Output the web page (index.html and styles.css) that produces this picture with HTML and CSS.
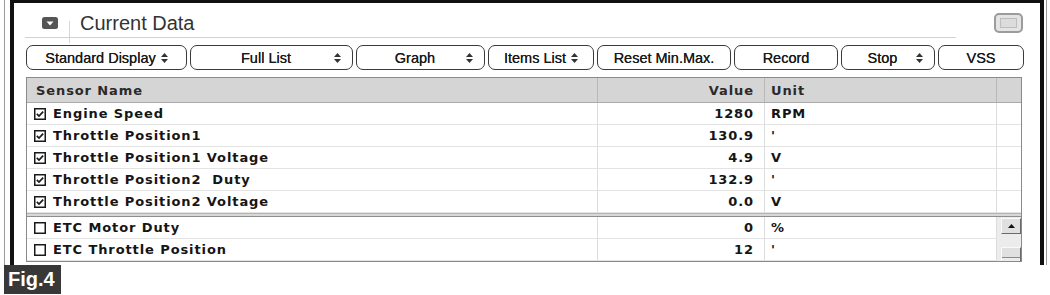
FILE: index.html
```html
<!DOCTYPE html>
<html>
<head>
<meta charset="utf-8">
<link rel="stylesheet" href="styles.css">
</head>
<body>
<div class="shell">
  <div class="frame">
    <div class="top">
      <div class="title-area">
        <span class="collapse"><svg width="16" height="12" viewBox="0 0 16 12"><rect x="0" y="0" width="16" height="12" rx="2.5" fill="#555"/><path d="M4.5 4.5 L11.5 4.5 L8 8.5 Z" fill="#fff"/></svg></span>
        <span class="sep"></span>
        <span class="title">Current Data</span>
      </div>
      <span class="winbtn"><span class="winbtn-in"></span></span>
    </div>

    <div class="toolbar">
      <div class="btn b1 grp"><span>Standard Display</span><svg class="spin" width="7" height="10" viewBox="0 0 7 10"><path d="M0 4 L3.5 0 L7 4 Z M0 6 L7 6 L3.5 10 Z" fill="#333"/></svg></div>
      <div class="btn b2 ctr"><span></span><span>Full List</span><svg class="spin end" width="7" height="10" viewBox="0 0 7 10"><path d="M0 4 L3.5 0 L7 4 Z M0 6 L7 6 L3.5 10 Z" fill="#333"/></svg></div>
      <div class="btn b3 ctr"><span></span><span>Graph</span><svg class="spin end" width="7" height="10" viewBox="0 0 7 10"><path d="M0 4 L3.5 0 L7 4 Z M0 6 L7 6 L3.5 10 Z" fill="#333"/></svg></div>
      <div class="btn b4 grp"><span>Items List</span><svg class="spin" width="7" height="10" viewBox="0 0 7 10"><path d="M0 4 L3.5 0 L7 4 Z M0 6 L7 6 L3.5 10 Z" fill="#333"/></svg></div>
      <div class="btn b5 grp"><span>Reset Min.Max.</span></div>
      <div class="btn b6 grp"><span>Record</span></div>
      <div class="btn b7 ctr"><span></span><span>Stop</span><svg class="spin end" width="7" height="10" viewBox="0 0 7 10"><path d="M0 4 L3.5 0 L7 4 Z M0 6 L7 6 L3.5 10 Z" fill="#333"/></svg></div>
      <div class="btn b8 grp"><span>VSS</span></div>
    </div>

    <div class="table">
      <div class="grid head">
        <div class="c name">Sensor Name</div>
        <div class="c val">Value</div>
        <div class="c unit">Unit</div>
        <div class="c last"></div>
      </div>

      <div class="grid pinned">
        <div class="c name"><svg class="cb" width="12" height="12" viewBox="0 0 12 12"><rect x="0.75" y="0.75" width="10.5" height="10.5" fill="#fff" stroke="#1a1a1a" stroke-width="1.5"/><path d="M2.8 5.8 L5 8 L9.2 3.6" fill="none" stroke="#1a1a1a" stroke-width="1.7"/></svg><span>Engine Speed</span></div>
        <div class="c val">1280</div><div class="c unit">RPM</div><div class="c last"></div>

        <div class="c name"><svg class="cb" width="12" height="12" viewBox="0 0 12 12"><rect x="0.75" y="0.75" width="10.5" height="10.5" fill="#fff" stroke="#1a1a1a" stroke-width="1.5"/><path d="M2.8 5.8 L5 8 L9.2 3.6" fill="none" stroke="#1a1a1a" stroke-width="1.7"/></svg><span>Throttle Position1</span></div>
        <div class="c val">130.9</div><div class="c unit">'</div><div class="c last"></div>

        <div class="c name"><svg class="cb" width="12" height="12" viewBox="0 0 12 12"><rect x="0.75" y="0.75" width="10.5" height="10.5" fill="#fff" stroke="#1a1a1a" stroke-width="1.5"/><path d="M2.8 5.8 L5 8 L9.2 3.6" fill="none" stroke="#1a1a1a" stroke-width="1.7"/></svg><span>Throttle Position1 Voltage</span></div>
        <div class="c val">4.9</div><div class="c unit">V</div><div class="c last"></div>

        <div class="c name"><svg class="cb" width="12" height="12" viewBox="0 0 12 12"><rect x="0.75" y="0.75" width="10.5" height="10.5" fill="#fff" stroke="#1a1a1a" stroke-width="1.5"/><path d="M2.8 5.8 L5 8 L9.2 3.6" fill="none" stroke="#1a1a1a" stroke-width="1.7"/></svg><span>Throttle Position2&nbsp; Duty</span></div>
        <div class="c val">132.9</div><div class="c unit">'</div><div class="c last"></div>

        <div class="c name"><svg class="cb" width="12" height="12" viewBox="0 0 12 12"><rect x="0.75" y="0.75" width="10.5" height="10.5" fill="#fff" stroke="#1a1a1a" stroke-width="1.5"/><path d="M2.8 5.8 L5 8 L9.2 3.6" fill="none" stroke="#1a1a1a" stroke-width="1.7"/></svg><span>Throttle Position2 Voltage</span></div>
        <div class="c val">0.0</div><div class="c unit">V</div><div class="c last"></div>
      </div>

      <div class="split"></div>

      <div class="grid scroll">
        <div class="c name"><svg class="cb" width="12" height="12" viewBox="0 0 12 12"><rect x="0.75" y="0.75" width="10.5" height="10.5" fill="#fff" stroke="#1a1a1a" stroke-width="1.5"/></svg><span>ETC Motor Duty</span></div>
        <div class="c val">0</div><div class="c unit">%</div>

        <div class="c name"><svg class="cb" width="12" height="12" viewBox="0 0 12 12"><rect x="0.75" y="0.75" width="10.5" height="10.5" fill="#fff" stroke="#1a1a1a" stroke-width="1.5"/></svg><span>ETC Throttle Position</span></div>
        <div class="c val">12</div><div class="c unit">'</div>

        <div class="sbar">
          <div class="sb-up"><svg width="7" height="4" viewBox="0 0 7 4"><path d="M0 4 L3.5 0 L7 4 Z" fill="#111"/></svg></div>
          <div class="sb-track"></div>
          <div class="sb-thumb"></div>
        </div>
      </div>
    </div>
  </div>
</div>
<div class="fig">Fig.4</div>
</body>
</html>
```

FILE: styles.css
```css
* { box-sizing: border-box; }

body {
  margin: 0;
  background: #fff;
  font-family: "Liberation Sans", Arial, sans-serif;
  color: #222;
}

.shell {
  margin-left: 4px;
  width: 1043px;
  border-left: 1px solid #9a9a9a;
  border-right: 1px solid #9a9a9a;
  padding-left: 5px;
  padding-right: 2px;
}

.frame {
  height: 265px;
  border-top: 3px solid #111;
  border-left: 4px solid #111;
  border-right: 4px solid #111;
  overflow: hidden;
}

/* title bar */
.top {
  display: flex;
  align-items: flex-start;
  padding-left: 11px;
  padding-right: 17px;
}

.title-area {
  flex: 1;
  height: 35px;
  margin-right: 38px;
  border-bottom: 1px solid #d2d2d2;
  display: flex;
  align-items: center;
  padding-top: 6px;
  padding-left: 17px;
}

.collapse { display: flex; }

.sep {
  align-self: flex-end;
  width: 1px;
  height: 22px;
  margin-left: 11px;
  margin-bottom: -6px;
  background: #d6d6d6;
}

.title {
  margin-left: 10px;
  font-size: 20px;
  color: #333;
  line-height: 20px;
}

.winbtn {
  margin-top: 10px;
  width: 29px;
  height: 20px;
  border: 2px solid #9c9c9c;
  border-radius: 5px;
  background: #e4e4e4;
  padding: 3px 4px;
  display: flex;
}
.winbtn-in {
  flex: 1;
  border: 1px solid #bdbdbd;
  background: #dcdcdc;
}

/* toolbar */
.toolbar {
  display: flex;
  gap: 3px;
  margin-top: 7px;
  padding-left: 12px;
  height: 25px;
}

.btn {
  height: 25px;
  border: 1.5px solid #3a3a3a;
  border-radius: 7px;
  background: #fff;
  font-size: 14.5px;
  color: #1a1a1a;
  white-space: nowrap;
  text-shadow: 0 0 0.4px #1a1a1a;
}
.btn.grp {
  display: flex;
  align-items: center;
  justify-content: center;
  gap: 5px;
}
.btn.ctr {
  display: grid;
  grid-template-columns: 1fr auto 1fr;
  align-items: center;
  padding-right: 11px;
}
.btn.ctr .end { justify-self: end; }

.b1 { width: 161px; }
.b2 { width: 163px; }
.b3 { width: 129px; }
.b4 { width: 106px; }
.b5 { width: 134px; }
.b6 { width: 104px; }
.b7 { width: 94px; }
.b8 { width: 86px; }

/* table */
.table {
  margin-top: 7px;
  margin-left: 12px;
  width: 996px;
  border: 1px solid #8a8a8a;
  font-family: "DejaVu Sans", sans-serif;
  font-weight: bold;
  font-size: 13px;
  letter-spacing: 0.9px;
  color: #151515;
}

.grid {
  display: grid;
  grid-template-columns: 571px 167px 232px 1fr;
}

.c {
  height: 22px;
  display: flex;
  align-items: center;
  border-right: 1px solid #dcdcdc;
  border-bottom: 1px solid #e3e3e3;
  white-space: nowrap;
}
.c.last { border-right: none; }

.name { padding-left: 7px; gap: 7px; }
.val { justify-content: flex-end; padding-right: 10px; }
.unit { padding-left: 6px; }

.head .c {
  height: 25px;
  background: #d5d5d5;
  border-bottom: 1px solid #a9a9a9;
  border-right: 1px solid #b8b8b8;
  color: #2a2a2a;
}
.head .c.name { padding-left: 9px; }
.head .c.last { border-right: none; }

.cb { flex: none; }

.split {
  height: 4px;
  background: #d8d8d8;
  border-top: 1px solid #b4b4b4;
  border-bottom: 1px solid #8d8d8d;
}

.scroll .c { height: 22px; }
.scroll .c.unit { border-right: 1px solid #dcdcdc; }

.sbar {
  grid-column: 4;
  grid-row: 1 / span 2;
  background: #ececec;
  display: flex;
  flex-direction: column;
  padding: 1px 0 0 4px;
}
.sb-up {
  width: 20px;
  height: 16px;
  background: #e0e0e0;
  border-top: 1px solid #fafafa;
  border-left: 1px solid #fafafa;
  border-right: 1px solid #6a6a6a;
  border-bottom: 1px solid #6a6a6a;
  display: flex;
  align-items: center;
  justify-content: center;
}
.sb-track { height: 13px; }
.sb-thumb {
  width: 20px;
  flex: 1;
  background: #e0e0e0;
  border-top: 1px solid #fafafa;
  border-left: 1px solid #fafafa;
  border-right: 1px solid #6a6a6a;
  box-shadow: inset 0 -3px 0 #ececec, inset 0 -4px 0 #8a8a8a;
}

/* figure label */
.fig {
  margin-left: 4px;
  width: 57px;
  height: 29px;
  background: #383838;
  color: #fff;
  font-family: "Liberation Sans", Arial, sans-serif;
  font-weight: bold;
  font-size: 20px;
  line-height: 29px;
  padding-left: 4px;
}
```
